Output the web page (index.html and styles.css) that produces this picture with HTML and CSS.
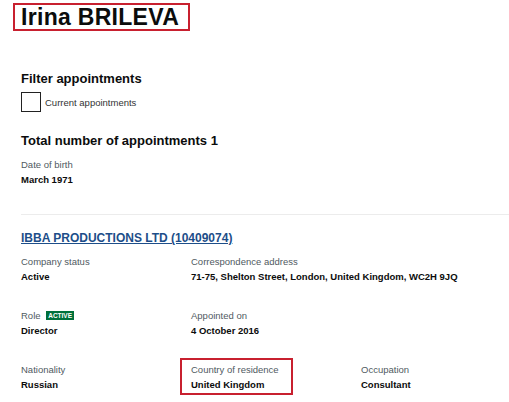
FILE: index.html
```html
<!DOCTYPE html>
<html lang="en">
<head>
  <meta charset="UTF-8" />
  <title>Irina BRILEVA - Appointments</title>
  <meta name="viewport" content="width=device-width, initial-scale=1.0"/>
  <link rel="stylesheet" href="styles.css">
</head>
<body>

  <h1 class="officer-name">Irina BRILEVA</h1>

  <section class="filter">
    <h2>Filter appointments</h2>
    <label class="check">
      <input type="checkbox" />
      <span>Current appointments</span>
    </label>
  </section>

  <h2 class="total">Total number of appointments 1</h2>

  <dl class="birth">
    <dt>Date of birth</dt>
    <dd>March 1971</dd>
  </dl>

  <div class="appointment">
    <h3><a href="#">IBBA PRODUCTIONS LTD (10409074)</a></h3>

    <div class="details">
      <dl>
        <dt>Company status</dt>
        <dd>Active</dd>
      </dl>
      <dl class="wide">
        <dt>Correspondence address</dt>
        <dd>71-75, Shelton Street, London, United Kingdom, WC2H 9JQ</dd>
      </dl>

      <dl>
        <dt>Role <span class="badge">Active</span></dt>
        <dd>Director</dd>
      </dl>
      <dl class="wide">
        <dt>Appointed on</dt>
        <dd>4 October 2016</dd>
      </dl>

      <dl>
        <dt>Nationality</dt>
        <dd>Russian</dd>
      </dl>
      <dl class="callout">
        <dt>Country of residence</dt>
        <dd>United Kingdom</dd>
      </dl>
      <dl>
        <dt>Occupation</dt>
        <dd>Consultant</dd>
      </dl>
    </div>
  </div>

</body>
</html>
```

FILE: styles.css
```css
:root {
  --text: #0b0c0c;
  --muted: #505a5f;
  --link: #1d4e89;
  --mark: #c8202f;
  --green: #00703c;
  --rule: #ececec;
}

* {
  box-sizing: border-box;
  margin: 0;
  padding: 0;
}

body {
  font-family: 'Liberation Sans', Arial, sans-serif;
  color: var(--text);
  background: #fff;
  padding: 3px 0 0 21px;
}

.officer-name {
  display: inline-block;
  margin-left: -8px;
  padding: 0 9px 0 6px;
  border: 2px solid var(--mark);
  font-size: 23px;
  line-height: 24px;
  font-weight: bold;
  letter-spacing: 0.3px;
}

.filter {
  margin-top: 39px;
}

.filter h2,
.total {
  font-size: 13px;
  line-height: 18px;
  font-weight: bold;
}

.check {
  display: flex;
  align-items: center;
  gap: 4px;
  margin-top: 4px;
  font-size: 9.5px;
  color: #333;
}

.check input {
  appearance: none;
  width: 20px;
  height: 20px;
  border: 1.5px solid #222;
  background: #fff;
  margin: 0;
}

.total {
  margin-top: 20px;
}

dt {
  font-size: 9.5px;
  line-height: 15px;
  color: var(--muted);
}

dd {
  font-size: 9.5px;
  line-height: 15px;
  font-weight: bold;
}

.birth {
  margin-top: 7px;
  padding-bottom: 27px;
  border-bottom: 1px solid var(--rule);
}

.appointment h3 {
  margin-top: 15px;
  font-size: 12px;
  line-height: 16px;
  font-weight: bold;
}

.appointment h3 a {
  color: var(--link);
}

.details {
  display: grid;
  grid-template-columns: 170px 170px 1fr;
  row-gap: 24px;
  margin-top: 8px;
}

.details .wide {
  grid-column: 2 / 4;
}

.badge {
  display: inline-block;
  margin-left: 3px;
  padding: 0 2px;
  background: var(--green);
  color: #fff;
  font-size: 6.5px;
  line-height: 9px;
  font-weight: bold;
  text-transform: uppercase;
  vertical-align: 1px;
}

.callout {
  align-self: start;
  width: 113px;
  margin: -4px 0 0 -11px;
  padding: 2px 0 1px 9px;
  border: 2px solid var(--mark);
}
```
